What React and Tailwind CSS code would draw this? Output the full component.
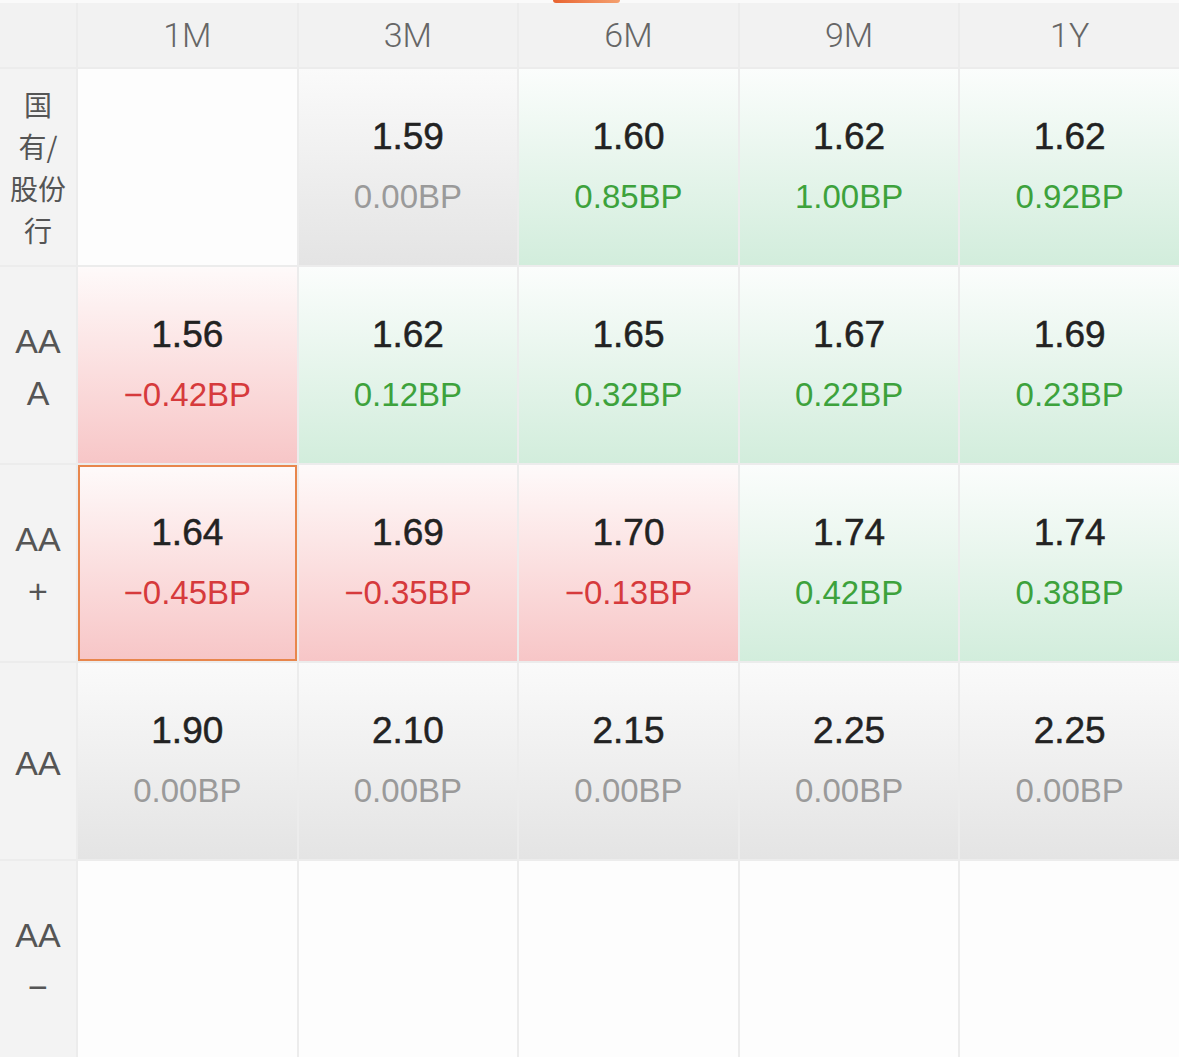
import React from 'react';

const cols = ['1M', '3M', '6M', '9M', '1Y'];

const rows = [
    {
        label: ['国', '有/', '股份', '行'],
        cjk: true,
        cells: [null, ['1.59', '0.00BP', 'gray'], ['1.60', '0.85BP', 'green'], ['1.62', '1.00BP', 'green'], ['1.62', '0.92BP', 'green']],
    },
    {
        label: ['AA', 'A'],
        cells: [['1.56', '−0.42BP', 'red'], ['1.62', '0.12BP', 'green'], ['1.65', '0.32BP', 'green'], ['1.67', '0.22BP', 'green'], ['1.69', '0.23BP', 'green']],
    },
    {
        label: ['AA', '+'],
        cells: [['1.64', '−0.45BP', 'red', true], ['1.69', '−0.35BP', 'red'], ['1.70', '−0.13BP', 'red'], ['1.74', '0.42BP', 'green'], ['1.74', '0.38BP', 'green']],
    },
    {
        label: ['AA'],
        cells: [['1.90', '0.00BP', 'gray'], ['2.10', '0.00BP', 'gray'], ['2.15', '0.00BP', 'gray'], ['2.25', '0.00BP', 'gray'], ['2.25', '0.00BP', 'gray']],
    },
    {
        label: ['AA', '−'],
        cells: [null, null, null, null, null],
    },
];

const tone = {
    green: 'bg-gradient-to-b from-[#fbfdfc] to-[#d2eddc]',
    red: 'bg-gradient-to-b from-[#fefafa] to-[#f7c6c7]',
    gray: 'bg-gradient-to-b from-[#fafafa] to-[#e4e4e4]',
};

const bpColor = {
    green: 'text-[#3da23c]',
    red: 'text-[#d63a3c]',
    gray: 'text-[#9a9a9a]',
};

const Cell = ({ cell }) => {
    if (!cell) return <div className="bg-[#fdfdfd]" />;
    const [value, bp, kind, active] = cell;
    return (
        <div
            className={`flex flex-col items-center justify-center gap-[20px] font-['Liberation_Sans',sans-serif] ${tone[kind]} ${
                active ? 'border-2 border-[#e8864c]' : ''
            }`}
        >
            <div className="text-[37px] leading-[40px] text-[#222] [-webkit-text-stroke:0.5px_#222]">{value}</div>
            <div className={`text-[33px] leading-[40px] ${bpColor[kind]}`}>{bp}</div>
        </div>
    );
};

const App = () => {
    return (
        <div className="w-[1179px] h-[1057px] overflow-hidden bg-[#ececec] font-['Roboto','Noto_Sans_CJK_SC',sans-serif]">
            <div className="h-[3px] bg-[#fafafa] flex">
                <div className="ml-[553px] w-[67px] h-[3px] rounded-b-[3px] bg-gradient-to-r from-[#e8632f] to-[#f4a06f]" />
            </div>
            <div className="grid grid-cols-[76px_repeat(5,1fr)] grid-rows-[64px_repeat(5,196px)] gap-[2px]">
                <div className="bg-[#f2f2f2]" />
                {cols.map((c) => (
                    <div key={c} className="bg-[#f2f2f2] flex items-center justify-center text-[34px] font-light text-[#666]">
                        {c}
                    </div>
                ))}
                {rows.map((row, i) => (
                    <React.Fragment key={i}>
                        <div
                            className={`bg-[#f3f3f3] flex flex-col items-center justify-center text-[#555] ${
                                row.cjk
                                    ? "text-[28px] leading-[42px] font-['Noto_Sans_CJK_SC',sans-serif]"
                                    : "text-[34px] leading-[52px] font-['Liberation_Sans',sans-serif] pt-[4px]"
                            }`}
                        >
                            {row.label.map((l, j) => (
                                <div key={j}>{l}</div>
                            ))}
                        </div>
                        {row.cells.map((cell, j) => (
                            <Cell key={j} cell={cell} />
                        ))}
                    </React.Fragment>
                ))}
            </div>
        </div>
    );
};

export default App;
